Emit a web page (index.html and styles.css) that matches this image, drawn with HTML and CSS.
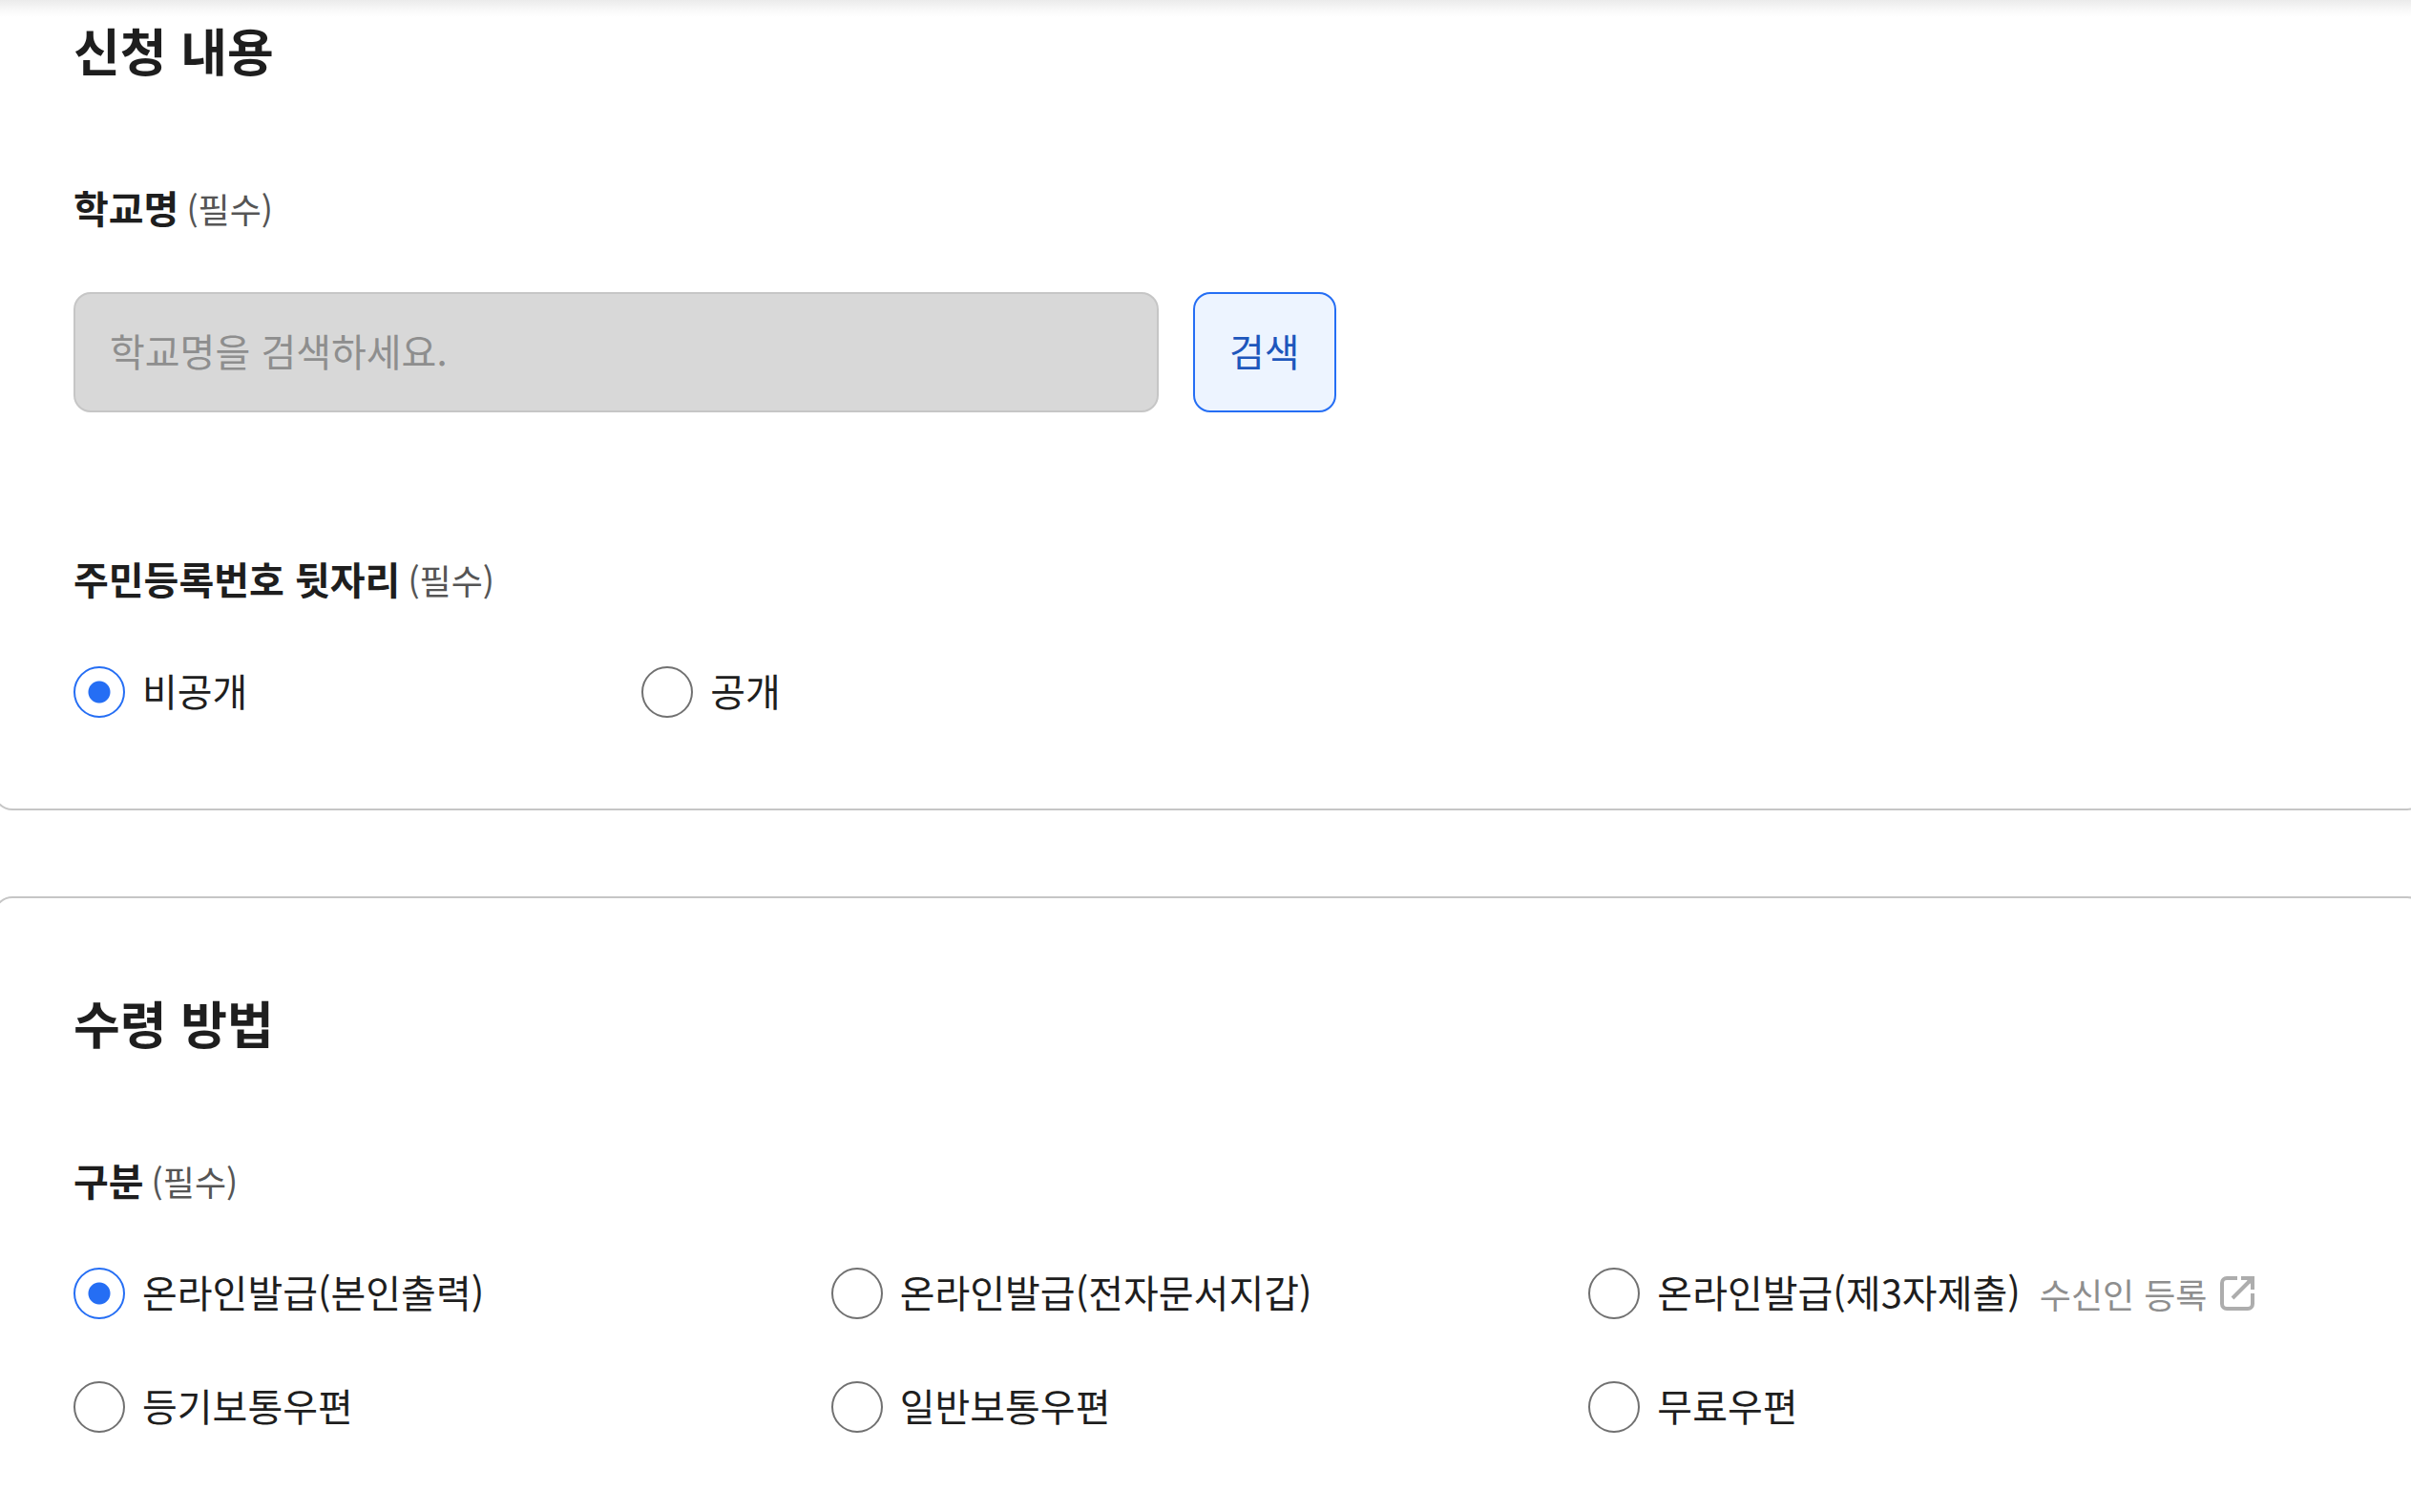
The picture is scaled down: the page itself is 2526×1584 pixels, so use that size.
FILE: index.html
```html
<!DOCTYPE html>
<html lang="ko">
<head>
  <meta charset="UTF-8">
  <meta name="viewport" content="width=device-width, initial-scale=1.0">
  <title>신청 내용</title>
  <link rel="stylesheet" href="styles.css">
</head>
<body>
  <form class="apply-form">
    <section class="box box-first">
      <h2>신청 내용</h2>

      <div class="form-group school">
        <label class="form-label" for="school">학교명<span class="required">(필수)</span></label>
        <div class="search-row">
          <input type="text" id="school" class="search-input" placeholder="학교명을 검색하세요." readonly>
          <button type="button" class="btn-search">검색</button>
        </div>
      </div>

      <fieldset class="form-group">
        <legend class="form-label">주민등록번호 뒷자리<span class="required">(필수)</span></legend>
        <div class="radio-list four">
          <div class="radio-item">
            <input type="radio" name="open" id="open1" checked>
            <label for="open1">비공개</label>
          </div>
          <div class="radio-item">
            <input type="radio" name="open" id="open2">
            <label for="open2">공개</label>
          </div>
        </div>
      </fieldset>
    </section>

    <section class="box">
      <h2>수령 방법</h2>

      <fieldset class="form-group">
        <legend class="form-label">구분<span class="required">(필수)</span></legend>
        <div class="radio-list">
          <div class="radio-item">
            <input type="radio" name="receive" id="receive1" checked>
            <label for="receive1">온라인발급(본인출력)</label>
          </div>
          <div class="radio-item">
            <input type="radio" name="receive" id="receive2">
            <label for="receive2">온라인발급(전자문서지갑)</label>
          </div>
          <div class="radio-item">
            <input type="radio" name="receive" id="receive3">
            <label for="receive3">온라인발급(제3자제출)</label>
            <a href="#" class="link-register">수신인 등록
              <svg viewBox="0 0 36 36" aria-hidden="true">
                <path d="M18 2H7a5 5 0 0 0-5 5v22a5 5 0 0 0 5 5h22a5 5 0 0 0 5-5V18M22 2h12v12M13 23L33 3"/>
                <path class="head" d="M26 2h9v9z"/>
              </svg>
            </a>
          </div>
          <div class="radio-item">
            <input type="radio" name="receive" id="receive4">
            <label for="receive4">등기보통우편</label>
          </div>
          <div class="radio-item">
            <input type="radio" name="receive" id="receive5">
            <label for="receive5">일반보통우편</label>
          </div>
          <div class="radio-item">
            <input type="radio" name="receive" id="receive6">
            <label for="receive6">무료우편</label>
          </div>
        </div>
      </fieldset>
    </section>
  </form>
</body>
</html>
```
FILE: styles.css
```css
* {
  box-sizing: border-box;
}

body {
  margin: 0;
  overflow: hidden;
  background: #fff;
  color: #1e1e1e;
  font-family: "Noto Sans CJK KR", sans-serif;
  font-size: 40px;
  line-height: 60px;
}

/* shadow of the fixed header */
body::before {
  content: "";
  position: absolute;
  top: 0;
  left: 0;
  right: 0;
  height: 18px;
  background: linear-gradient(#ebebeb, #f9f9f9 60%, #fff);
}

/* the boxes run past both edges of the window */
.apply-form {
  display: flex;
  flex-direction: column;
  gap: 90px;
  margin: 0 -16px 0 -7px;
}

.box {
  padding: 90px 82px;
  border: 2px solid #c6c6c6;
  border-radius: 20px;
}

.box-first {
  padding-top: 12px;
  padding-bottom: 92px;
  border-top: 0;
  border-top-left-radius: 0;
  border-top-right-radius: 0;
}

h2 {
  position: relative;
  margin: 0 0 95px;
  font-size: 53px;
  font-weight: 700;
  line-height: 80px;
}

.form-group {
  margin: 0;
  padding: 0;
  border: 0;
}

.school {
  margin-bottom: 144px;
}

.form-label {
  display: block;
  padding: 0;
  font-weight: 700;
}

.required {
  margin-left: 8px;
  color: #555;
  font-size: 36px;
  font-weight: 400;
  line-height: 1;
}

.search-row {
  display: flex;
  gap: 36px;
  margin-top: 59px;
}

.search-input {
  width: 1137px;
  max-width: 60%;
  height: 126px;
  padding: 0 36px 4px;
  border: 2px solid #c6c6c6;
  border-radius: 18px;
  background: #d8d8d8;
  font: inherit;
}

.search-input::placeholder {
  color: #8e8e8e;
}

.btn-search {
  height: 126px;
  padding: 0 36px 4px;
  border: 2px solid #256ef4;
  border-radius: 18px;
  background: #edf4ff;
  color: #1d56bc;
  font: inherit;
  cursor: pointer;
}

.radio-list {
  display: grid;
  grid-template-columns: repeat(3, 1fr);
  row-gap: 59px;
  margin-top: 59px;
}

.radio-list.four {
  grid-template-columns: repeat(4, 1fr);
}

.radio-item {
  display: flex;
  align-items: center;
  gap: 18px;
}

.radio-item label {
  padding-bottom: 4px;
  line-height: 56px;
}

.radio-item input {
  flex: none;
  appearance: none;
  width: 54px;
  height: 54px;
  margin: 0;
  border: 2px solid #717171;
  border-radius: 50%;
  background: #fff;
}

.radio-item input:checked {
  border-color: #256ef4;
  background: radial-gradient(circle, #256ef4 11px, #fff 12px);
}

.link-register {
  display: flex;
  align-items: center;
  gap: 14px;
  margin-left: 2px;
  color: #8e8e8e;
  font-size: 36px;
  text-decoration: none;
}

.link-register svg {
  width: 36px;
  height: 36px;
  fill: none;
  stroke: #adadad;
  stroke-width: 4;
}

.link-register .head {
  fill: #adadad;
  stroke: none;
}
```
